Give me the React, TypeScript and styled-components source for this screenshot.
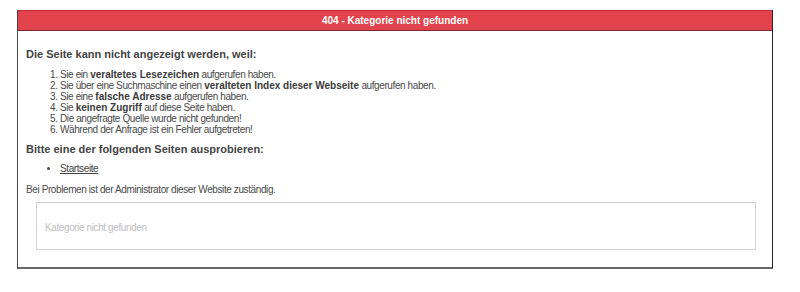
import React from 'react';
import styled, { createGlobalStyle } from 'styled-components';

const GlobalStyle = createGlobalStyle`
  html, body {
    margin: 0;
    padding: 0;
    background: #ffffff;
  }
  body {
    font-family: 'Liberation Sans', Arial, sans-serif;
    font-size: 10px;
    letter-spacing: -0.4px;
    color: #4a4a4a;
  }
`;

const Page = styled.div`
  padding: 10px 0 0 17px;
`;

const Box = styled.div`
  width: 756px;
  box-sizing: border-box;
  border-left: 1px solid #444444;
  border-right: 1px solid #222222;
  border-bottom: 2px solid #666666;
  background: #ffffff;
`;

const Header = styled.div`
  height: 19px;
  background-color: #e3434c;
  border-top: 1px solid #b8303a;
  border-bottom: 1px solid #7a2a2e;
  color: #ffffff;
  font-weight: bold;
  font-size: 10px;
  letter-spacing: 0;
  line-height: 19px;
  text-align: center;
`;

const Content = styled.div`
  padding: 16px 16px 17px 8px;
`;

const Lead = styled.p<{ $gap: number }>`
  margin: 0 0 ${(p) => p.$gap}px 0;
  font-weight: bold;
  font-size: 11px;
  letter-spacing: 0;
  color: #444444;
  line-height: 14px;
`;

const Text = styled.p`
  margin: 0 0 5px 0;
  line-height: 14px;
`;

const List = styled.ol`
  margin: 0 0 7px 0;
  padding-left: 34px;
  line-height: 11px;
`;

const Links = styled.ul`
  margin: 0 0 7px 0;
  padding-left: 34px;
  line-height: 14px;
`;

const Link = styled.a`
  color: #444444;
  text-decoration: underline;
`;

const Strong = styled.b`
  color: #3a3a3a;
  font-size: 10px;
  letter-spacing: 0;
`;

const Notice = styled.div`
  margin-left: 10px;
  height: 48px;
  box-sizing: border-box;
  border: 1px solid #d9cfd9;
  padding: 2px 0 0 8px;
  display: flex;
  align-items: center;
  color: #c0c0c0;
`;

export default function App() {
  return (
    <>
      <GlobalStyle />
      <Page>
        <Box>
          <Header>404 - Kategorie nicht gefunden</Header>
          <Content>
            <Lead $gap={8}>Die Seite kann nicht angezeigt werden, weil:</Lead>
            <List>
              <li>Sie ein <Strong>veraltetes Lesezeichen</Strong> aufgerufen haben.</li>
              <li>Sie über eine Suchmaschine einen <Strong>veralteten Index dieser Webseite</Strong> aufgerufen haben.</li>
              <li>Sie eine <Strong>falsche Adresse</Strong> aufgerufen haben.</li>
              <li>Sie <Strong>keinen Zugriff</Strong> auf diese Seite haben.</li>
              <li>Die angefragte Quelle wurde nicht gefunden!</li>
              <li>Während der Anfrage ist ein Fehler aufgetreten!</li>
            </List>
            <Lead $gap={6}>Bitte eine der folgenden Seiten ausprobieren:</Lead>
            <Links>
              <li><Link href="#">Startseite</Link></li>
            </Links>
            <Text>Bei Problemen ist der Administrator dieser Website zuständig.</Text>
            <Notice>Kategorie nicht gefunden</Notice>
          </Content>
        </Box>
      </Page>
    </>
  );
}
